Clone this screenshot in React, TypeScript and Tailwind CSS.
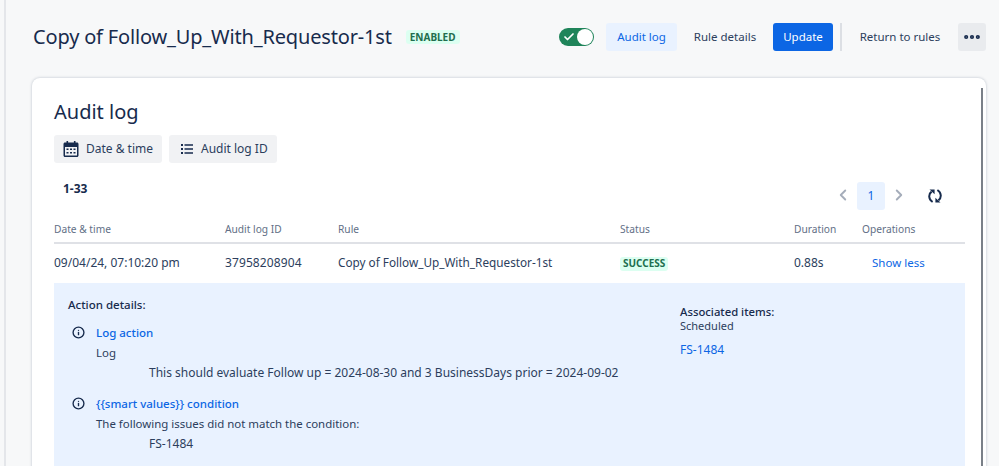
import React from 'react';
import { Check, ChevronLeft, ChevronRight, Info, Ellipsis } from 'lucide-react';

const font = "font-['Noto_Sans','Open_Sans',sans-serif]";

const CalendarIcon = () => (
  <svg width="16" height="16" viewBox="0 0 16 16" className="text-[#172b4d]">
    <path
      fill="currentColor"
      fillRule="evenodd"
      d="M3.5 0h1.6v1.6h5.8V0h1.6v1.6h1.5c.8 0 1.5.7 1.5 1.5v11.4c0 .8-.7 1.5-1.5 1.5H2c-.8 0-1.5-.7-1.5-1.5V3.1c0-.8.7-1.5 1.5-1.5h1.5V0zM2 6v8.5h12V6H2z"
    />
    <path
      fill="currentColor"
      d="M3.5 7.5h2v1.5h-2zM7 7.5h2v1.5H7zM10.5 7.5h2v1.5h-2zM3.5 11h2v1.5h-2zM7 11h2v1.5H7zM10.5 11h2v1.5h-2z"
    />
  </svg>
);

const ListIcon = () => (
  <svg width="12" height="10" viewBox="0 0 12 10" className="text-[#172b4d]">
    <path fill="currentColor" d="M0 0h2v2H0zM3.5 .2H12v1.6H3.5zM0 4h2v2H0zM3.5 4.2H12v1.6H3.5zM0 8h2v2H0zM3.5 8.2H12v1.6H3.5z" />
  </svg>
);

const RefreshIcon = () => (
  <svg width="14" height="14" viewBox="0 0 14 14">
    <g fill="none" stroke="#172b4d" strokeWidth="2">
      <path d="M4.6 13 C.4 10.5 .2 5 3.6 2.6" />
      <path d="M9.4 1 C13.6 3.5 13.8 9 10.4 11.4" />
    </g>
    <path fill="#172b4d" d="M1.5 0.6 H6.6 V5.2 Z M12.5 13.4 H7.4 V8.8 Z" />
  </svg>
);

const columns = 'grid grid-cols-[171px_113px_282px_174px_68px_1fr]';

const LogEntry: React.FC<{ title: string; text: string; detail: string }> = ({ title, text, detail }) => (
  <div className="flex">
    <div className="w-[28px] pl-[4px] pt-[3px]">
      <Info className="w-[13px] h-[13px] text-[#172b4d]" strokeWidth={2.5} />
    </div>
    <div>
      <div className="text-[#0c66e4] text-[11.5px] font-medium leading-[20px]">{title}</div>
      <div className="text-[11.45px] leading-[20px]">{text}</div>
      <div className="pl-[53px] leading-[20px]">{detail}</div>
    </div>
  </div>
);

export default function App() {
  return (
    <div className={`${font} h-[466px] w-[999px] overflow-hidden bg-[#f7f8f9] text-[12px] text-[#2c3e5d]`}>
      <div className="h-full ml-[4px] border-l-2 border-[#e4e6ea] pl-[26px] pr-[13px]">
        <div className="h-[78px] flex items-center pb-[4px]">
          <h1 className="text-[20px] tracking-[-0.17px] leading-[28px] text-[#172b4d] pl-px">
            Copy of Follow_Up_With_Requestor-1st
          </h1>
          <span className="ml-[14px] px-[4px] h-[14px] flex items-center rounded-[3px] bg-[#dcfff1] text-[#216e4e] text-[10px] font-bold">
            ENABLED
          </span>
          <div className="ml-auto flex items-center text-[11.5px]">
            <div className="relative w-[35px] h-[18px] rounded-full bg-[#1f845a] mr-[12px]">
              <Check className="absolute left-[4px] top-[3px] w-[12px] h-[12px] text-white" strokeWidth={3.5} />
              <span className="absolute right-[1px] top-[1px] w-[16px] h-[16px] rounded-full bg-white" />
            </div>
            <button className="h-[28px] w-[71px] rounded-[3px] bg-[#e9f2ff] text-[#0c66e4]">Audit log</button>
            <button className="h-[28px] w-[96px] text-[#2c3e5d]">Rule details</button>
            <button className="h-[28px] w-[60px] rounded-[3px] bg-[#0c66e4] text-white">Update</button>
            <span className="mx-[7px] w-[2px] h-[28px] bg-[#dcdfe4]" />
            <button className="h-[28px] w-[105px] pr-[3px] text-[#2c3e5d]">Return to rules</button>
            <button className="ml-[4px] h-[28px] w-[28px] rounded-[3px] bg-[#e9ebee] flex items-center justify-center">
              <Ellipsis className="w-[20px] h-[20px] text-[#172b4d]" strokeWidth={3} />
            </button>
          </div>
        </div>

        <div className="relative h-[400px] rounded-t-[8px] bg-white shadow-[0_0_3px_rgba(9,30,66,0.25)] pl-[22px] pr-[21px] pt-[20px]">
          <div className="absolute right-[3px] top-[10px] bottom-0 w-[2px] bg-[#7a8088]" />
          <h2 className="text-[20px] leading-[28px] text-[#172b4d]">Audit log</h2>
          <div className="mt-[9px] flex gap-[7px]">
            <button className="h-[28px] w-[108px] rounded-[3px] bg-[#f1f2f4] flex items-center pl-[9px] gap-[7px]">
              <CalendarIcon />
              Date &amp; time
            </button>
            <button className="h-[28px] w-[108px] rounded-[3px] bg-[#f1f2f4] flex items-center pl-[12px] gap-[8px]">
              <ListIcon />
              Audit log ID
            </button>
          </div>

          <div className="h-[53px] flex items-start justify-between">
            <span className="ml-[9px] mt-[18px] font-bold text-[#172b4d] leading-[16px]">1-33</span>
            <div className="flex items-center mt-[19px] mr-[23px]">
              <ChevronLeft className="-mt-[3px] -ml-px w-[18px] h-[18px] text-[#a5adba]" strokeWidth={2.5} />
              <span className="ml-[5px] w-[28px] h-[28px] rounded-[3px] bg-[#e9f2ff] text-[#0c66e4] flex items-center justify-center">
                1
              </span>
              <ChevronRight className="-mt-[3px] ml-[5px] w-[18px] h-[18px] text-[#a5adba]" strokeWidth={2.5} />
              <span className="ml-[20px] -mt-[1px]">
                <RefreshIcon />
              </span>
            </div>
          </div>

          <div className={`${columns} h-[28px] items-center border-b-2 border-[#dfe1e6] text-[#626f86] text-[10.2px] pt-[2px]`}>
            <span>Date &amp; time</span>
            <span>Audit log ID</span>
            <span>Rule</span>
            <span>Status</span>
            <span>Duration</span>
            <span>Operations</span>
          </div>
          <div className={`${columns} h-[39px] items-center pb-[1px]`}>
            <span>09/04/24, 07:10:20 pm</span>
            <span className="tracking-[0.1px]">37958208904</span>
            <span className="text-[11.75px]">Copy of Follow_Up_With_Requestor-1st</span>
            <span>
              <span className="inline-flex items-center h-[14px] px-[3px] rounded-[3px] bg-[#dcfff1] text-[#216e4e] text-[10px] font-bold">
                SUCCESS
              </span>
            </span>
            <span>0.88s</span>
            <span className="pl-[10px] text-[#0c66e4] text-[11.5px]">Show less</span>
          </div>

          <div className="h-[190px] bg-[#e9f2ff] flex pl-[14px] pt-[12px]">
            <div className="w-[612px]">
              <div className="font-medium text-[11.5px] text-[#172b4d] leading-[20px]">Action details:</div>
              <div className="mt-[8px] flex flex-col gap-[11px]">
                <LogEntry
                  title="Log action"
                  text="Log"
                  detail="This should evaluate Follow up = 2024-08-30 and 3 BusinessDays prior = 2024-09-02"
                />
                <LogEntry
                  title="{{smart values}} condition"
                  text="The following issues did not match the condition:"
                  detail="FS-1484"
                />
              </div>
            </div>
            <div className="pt-[10px]">
              <div className="font-medium text-[11.3px] text-[#172b4d] leading-[14px]">Associated items:</div>
              <div className="text-[11px] leading-[14px]">Scheduled</div>
              <div className="mt-[9px] text-[#0c66e4] leading-[16px]">FS-1484</div>
            </div>
          </div>
        </div>
      </div>
    </div>
  );
}
